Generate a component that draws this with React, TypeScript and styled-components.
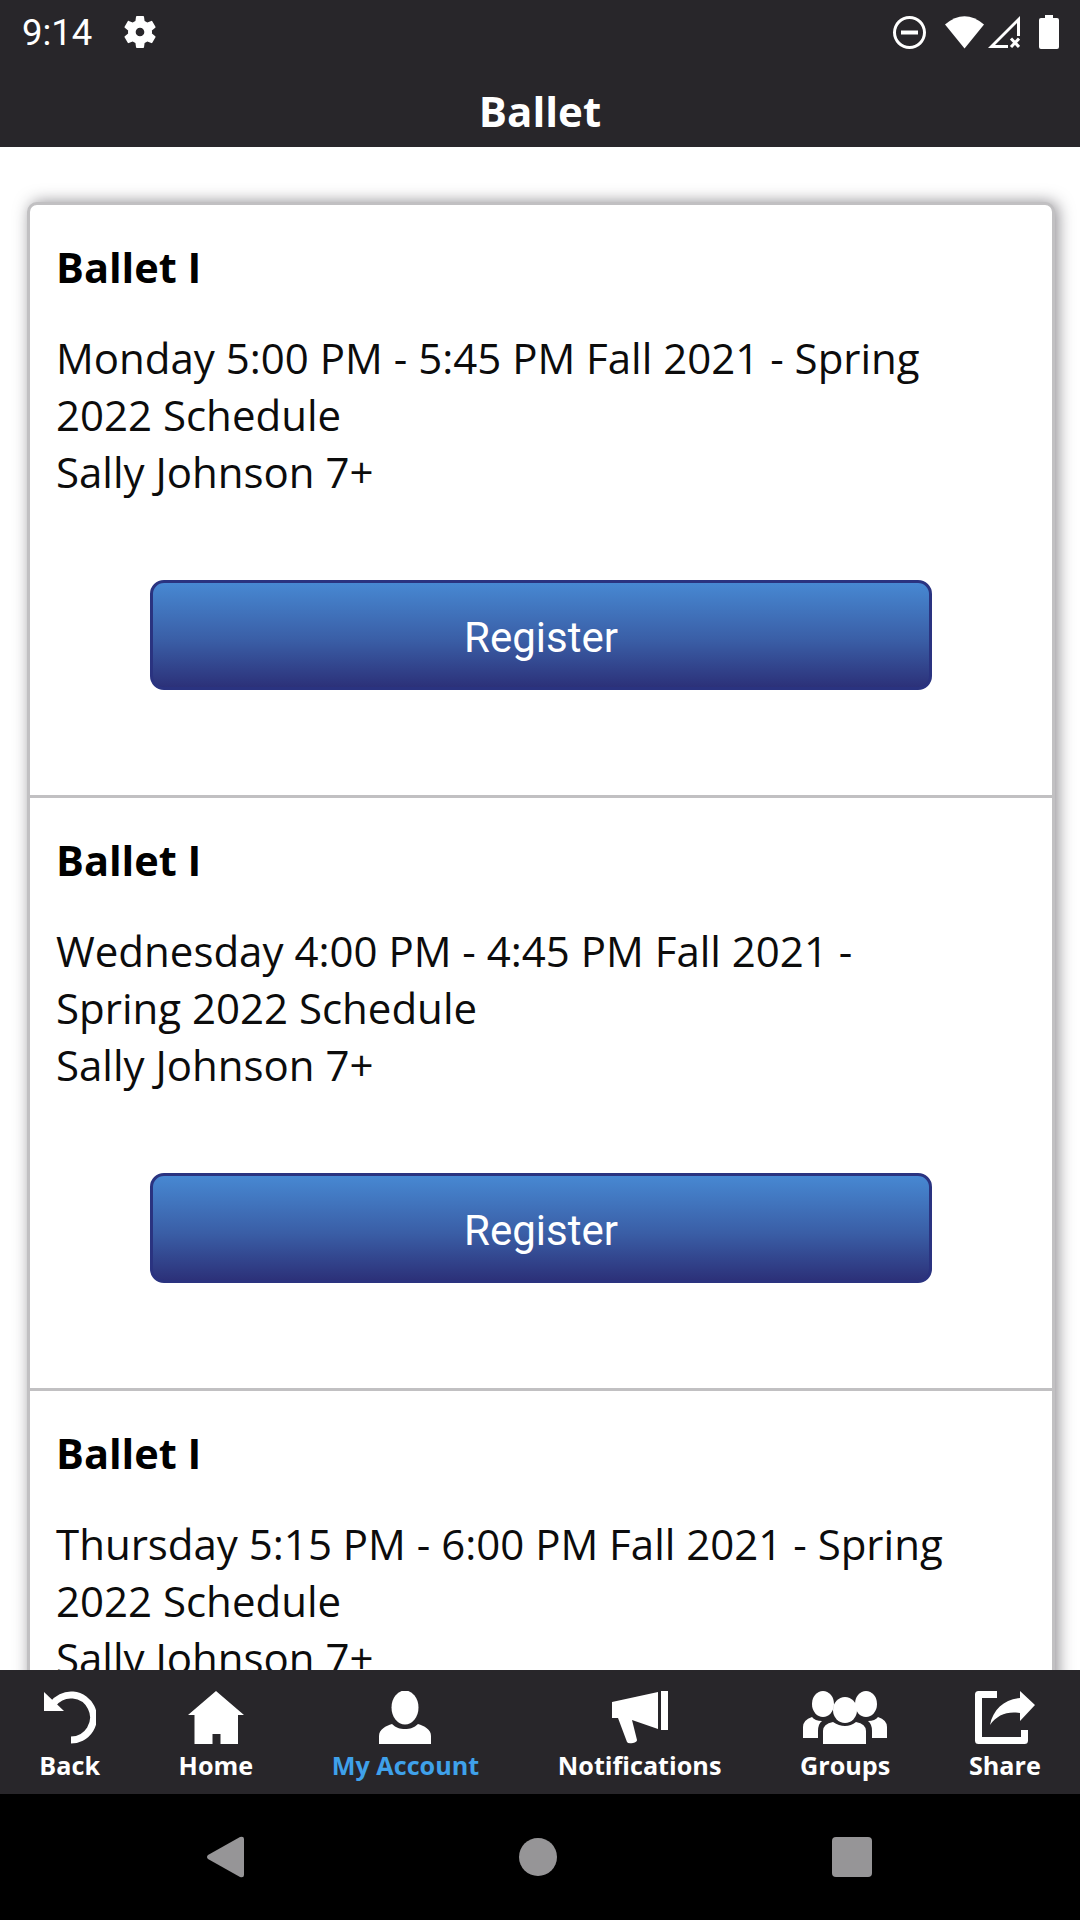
import styled, { createGlobalStyle } from "styled-components";

const GlobalStyle = createGlobalStyle`
  html, body {
    margin: 0;
    padding: 0;
    background: #fff;
  }
  * {
    box-sizing: border-box;
  }
`;

const Page = styled.div`
  width: 1080px;
  height: 1920px;
  display: flex;
  flex-direction: column;
  overflow: hidden;
  font-family: "Open Sans", "Liberation Sans", sans-serif;
`;

const StatusBar = styled.div`
  height: 66px;
  flex: none;
  display: flex;
  align-items: center;
  padding: 0 21px 2px 22px;
  background: #28262a;
  color: #fff;
`;

const Clock = styled.span`
  font-family: Roboto, sans-serif;
  font-size: 36.5px;
  margin-right: 28px;
`;

const StatusIcons = styled.div`
  margin-left: auto;
  display: flex;
  align-items: center;
`;

const StatusIcon = styled.svg<{ $gap?: number }>`
  display: block;
  fill: #fff;
  margin-left: ${(props) => props.$gap ?? 0}px;
`;

const Toolbar = styled.div`
  height: 81px;
  flex: none;
  display: flex;
  justify-content: center;
  padding-top: 4px;
  background: #28262a;
  color: #fff;
  font-size: 42px;
  font-weight: 700;
  line-height: 81px;
`;

const Content = styled.main`
  flex: 1;
  min-height: 0;
  overflow: hidden;
  padding: 55px 25px 0 27px;
  background: #fff;
`;

const Card = styled.div`
  border: 3px solid #c1c0c2;
  border-radius: 10px;
  background: #fff;
  box-shadow: 3px 0 16px rgba(40, 36, 46, 0.52);
`;

const Item = styled.section`
  height: 593px;
  padding: 34px 26px 0;
  border-bottom: 3px solid #c1c0c2;
`;

const ItemTitle = styled.h3`
  margin: 0 0 33px;
  font-size: 41.5px;
  font-weight: 700;
  line-height: 57px;
  color: #000;
`;

const ItemText = styled.p`
  max-width: 910px;
  margin: 0 0 80px;
  font-size: 42px;
  font-weight: 400;
  line-height: 57px;
  color: #0c0c0c;
`;

const RegisterButton = styled.button`
  display: block;
  width: 782px;
  height: 110px;
  margin-left: 94px;
  padding: 4px 0 0;
  border: 3px solid #2a3380;
  border-radius: 14px;
  background: linear-gradient(#4788d2, #3a5ea6 55%, #2c3179);
  color: #fff;
  font-family: Roboto, sans-serif;
  font-size: 42px;
`;

const TabBar = styled.nav`
  height: 124px;
  flex: none;
  display: flex;
  padding-top: 21px;
  background: #28262a;
`;

const Tab = styled.div<{ $active?: boolean }>`
  display: flex;
  flex-direction: column;
  align-items: center;
  padding: 0 39.3px;
  color: ${(props) => (props.$active ? "#3fa1ea" : "#fff")};
`;

const TabIcon = styled.svg`
  display: block;
  height: 53px;
  fill: currentColor;
`;

const AccountIcon = styled(TabIcon)`
  color: #fff;
`;

const TabLabel = styled.span`
  margin-top: 5px;
  font-size: 25.2px;
  font-weight: 700;
  line-height: 32px;
  white-space: nowrap;
`;

const NavBar = styled.div`
  height: 126px;
  flex: none;
  display: flex;
  justify-content: center;
  align-items: center;
  gap: 275px;
  padding-right: 2px;
  background: #000;
`;

const NavBack = styled.svg`
  display: block;
  fill: #969597;
`;

const NavHome = styled.div`
  width: 38px;
  height: 38px;
  border-radius: 50%;
  background: #969597;
`;

const NavRecent = styled.div`
  width: 40px;
  height: 40px;
  border-radius: 4px;
  background: #969597;
`;

const items = [
  {
    id: 1,
    lines: ["Monday 5:00 PM - 5:45 PM Fall 2021 - Spring 2022 Schedule", "Sally Johnson 7+"],
  },
  {
    id: 2,
    lines: ["Wednesday 4:00 PM - 4:45 PM Fall 2021 - Spring 2022 Schedule", "Sally Johnson 7+"],
  },
  {
    id: 3,
    lines: ["Thursday 5:15 PM - 6:00 PM Fall 2021 - Spring 2022 Schedule", "Sally Johnson 7+"],
  },
];

function App() {
  return (
    <Page>
      <GlobalStyle />
      <StatusBar>
        <Clock>9:14</Clock>
        <StatusIcon width="40" height="40" viewBox="0 0 24 24">
          <path d="M19.14 12.94c.04-.3.06-.61.06-.94 0-.32-.02-.64-.07-.94l2.03-1.58a.49.49 0 0 0 .12-.61l-1.92-3.32a.488.488 0 0 0-.59-.22l-2.39.96c-.5-.38-1.03-.7-1.62-.94l-.36-2.54a.484.484 0 0 0-.48-.41h-3.84c-.24 0-.43.17-.47.41l-.36 2.54c-.59.24-1.13.57-1.62.94l-2.39-.96c-.22-.08-.47 0-.59.22L2.74 8.87c-.12.21-.08.47.12.61l2.03 1.58c-.05.3-.07.62-.07.94s.02.64.07.94l-2.03 1.58a.49.49 0 0 0-.12.61l1.92 3.32c.12.22.37.29.59.22l2.39-.96c.5.38 1.03.7 1.62.94l.36 2.54c.05.24.24.41.48.41h3.84c.24 0 .44-.17.47-.41l.36-2.54c.59-.24 1.13-.56 1.62-.94l2.39.96c.22.08.47 0 .59-.22l1.92-3.32c.12-.22.07-.47-.12-.61l-2.01-1.58zM12 14.6c-1.43 0-2.6-1.17-2.6-2.6s1.17-2.6 2.6-2.6 2.6 1.17 2.6 2.6-1.17 2.6-2.6 2.6z" />
        </StatusIcon>
        <StatusIcons>
          <StatusIcon width="33" height="33" viewBox="0 0 33 33">
            <path d="M16.5 0a16.5 16.5 0 1 0 0 33 16.5 16.5 0 0 0 0-33zm0 3a13.5 13.5 0 1 1 0 27 13.5 13.5 0 0 1 0-27z" />
            <rect x="8" y="14.5" width="17" height="4" />
          </StatusIcon>
          <StatusIcon $gap={19} width="39" height="33" viewBox="0 0 39 33">
            <path d="M0 8.5Q19.5-8 39 8.5L19.5 32.5Z" />
          </StatusIcon>
          <StatusIcon $gap={4} width="32" height="32" viewBox="0 0 32 32">
            <path d="M0 32 32 0V20H29V7L7 29H20V32Z" />
            <path d="M23 22.5 31 31M31 22.5 23 31" stroke="#fff" strokeWidth="3" fill="none" />
          </StatusIcon>
          <StatusIcon $gap={19} width="20" height="34" viewBox="0 0 20 34">
            <path d="M6 0H14V3H18Q20 3 20 5V32Q20 34 18 34H2Q0 34 0 32V5Q0 3 2 3H6Z" />
          </StatusIcon>
        </StatusIcons>
      </StatusBar>
      <Toolbar>Ballet</Toolbar>
      <Content>
        <Card>
          {items.map((item) => (
            <Item key={item.id}>
              <ItemTitle>Ballet I</ItemTitle>
              <ItemText>
                {item.lines[0]}
                <br />
                {item.lines[1]}
              </ItemText>
              <RegisterButton>Register</RegisterButton>
            </Item>
          ))}
        </Card>
      </Content>
      <TabBar>
        <Tab>
          <TabIcon width="52" viewBox="0 0 52 53">
            <path d="M0 1V20H20Z" />
            <path d="M9 13A22.5 22.5 0 1 1 27 49" fill="none" stroke="currentColor" strokeWidth="7" />
          </TabIcon>
          <TabLabel>Back</TabLabel>
        </Tab>
        <Tab>
          <TabIcon width="56" viewBox="0 0 56 53">
            <path d="M28 0 56 24H50V53H32.5V43H24.5V53H6.5V24H0Z" />
          </TabIcon>
          <TabLabel>Home</TabLabel>
        </Tab>
        <Tab $active>
          <AccountIcon width="52" viewBox="0 0 52 53">
            <ellipse cx="26" cy="16.5" rx="13.5" ry="17" />
            <path d="M0 53V45C0 38 7 35 13 33 17 37 21 38 26 38 31 38 35 37 39 33 45 35 52 38 52 45V53Z" />
          </AccountIcon>
          <TabLabel>My Account</TabLabel>
        </Tab>
        <Tab>
          <TabIcon width="56" viewBox="0 0 56 53">
            <rect x="49" y="0" width="7" height="39" />
            <path d="M0 11 46 1V38L20 29 25 49Q25 51 21 52 16 53 15 51L6 27H0Z" />
          </TabIcon>
          <TabLabel>Notifications</TabLabel>
        </Tab>
        <Tab>
          <TabIcon width="84" viewBox="0 0 84 53">
            <ellipse cx="20" cy="13" rx="11" ry="13" />
            <ellipse cx="63" cy="13" rx="11" ry="13" />
            <ellipse cx="42" cy="19" rx="12" ry="13" />
            <path d="M20 53V40Q20 33 30 31 36 35 42 35 48 35 53 31 63 33 63 40V53Z" />
            <path d="M0 47V36Q0 29 9 26 12 30 19 30 15 33 15 40V47Z" />
            <path d="M84 47V36Q84 29 75 26 72 30 65 30 69 33 69 40V47Z" />
          </TabIcon>
          <TabLabel>Groups</TabLabel>
        </Tab>
        <Tab>
          <TabIcon width="60" viewBox="0 0 60 53">
            <path d="M22 3.5H3.5V49.5H49.5V39" fill="none" stroke="currentColor" strokeWidth="7" strokeLinejoin="round" />
            <path d="M45 0 60 14 45 30V22C32 20 22 24 15 34 18 18 30 8 45 7Z" />
          </TabIcon>
          <TabLabel>Share</TabLabel>
        </Tab>
      </TabBar>
      <NavBar>
        <NavBack width="37" height="42" viewBox="0 0 37 42">
          <path d="M1 19 33 1Q37 0 37 3V39Q37 42 33 41L1 23Q-1 21 1 19Z" />
        </NavBack>
        <NavHome />
        <NavRecent />
      </NavBar>
    </Page>
  );
}

export default App;
